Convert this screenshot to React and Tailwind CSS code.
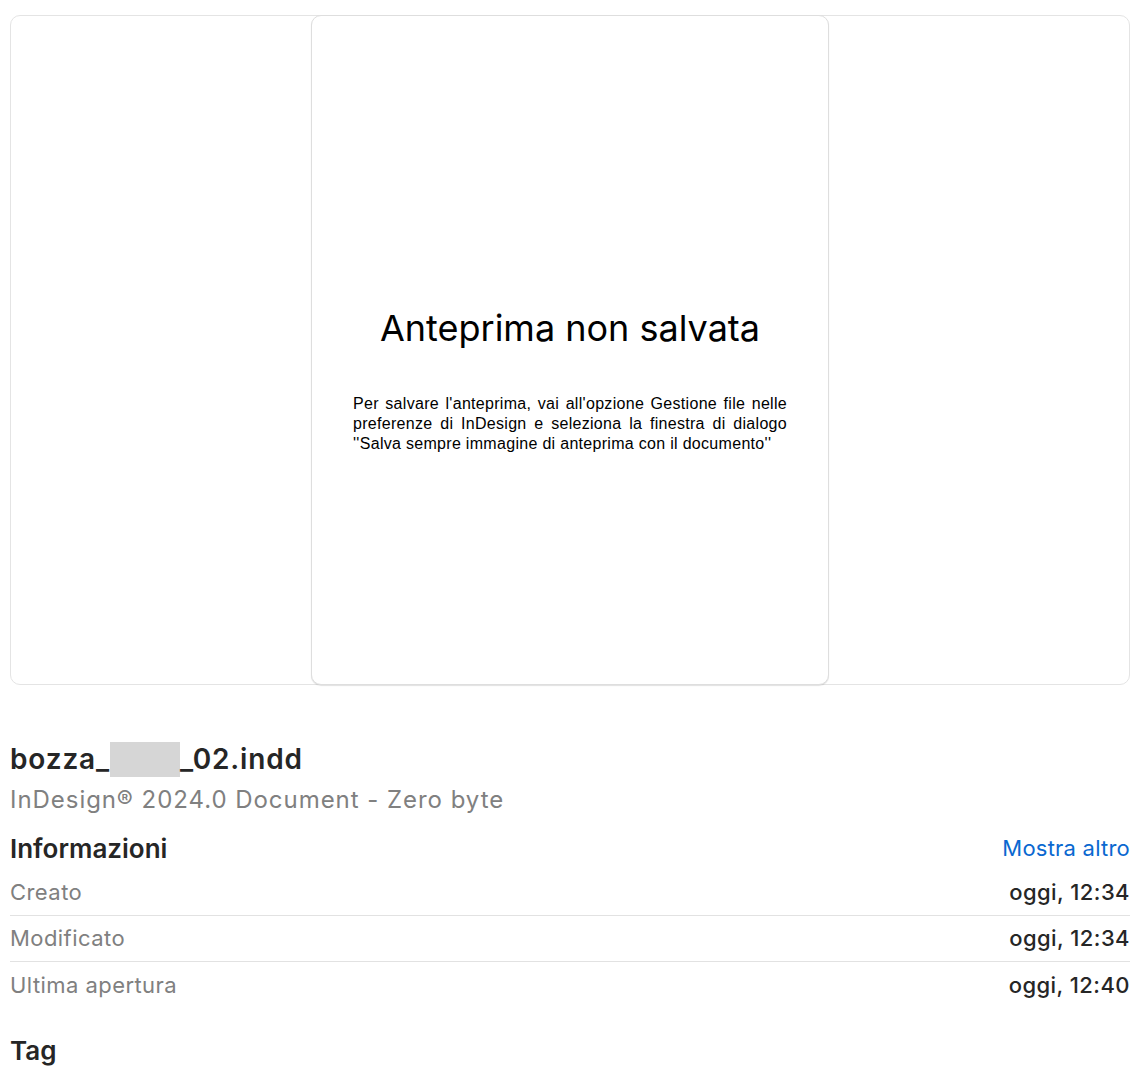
export default function App() {
  const rows = [
    { label: "Creato", value: "oggi, 12:34" },
    { label: "Modificato", value: "oggi, 12:34" },
    { label: "Ultima apertura", value: "oggi, 12:40" },
  ]

  return (
    <div className="min-h-screen bg-white pl-[10px] pr-[16px] pt-[15px] font-['Inter',sans-serif]">
      {/* Preview card */}
      <div className="flex h-[670px] justify-center rounded-[10px] border border-[#e4e4e4] bg-white">
        <div className="-my-px flex w-[518px] flex-col items-center rounded-[10px] border border-[#dedede] bg-white pt-[290px] shadow-[0_1px_1px_rgba(0,0,0,0.12)]">
          <h1 className="h-[44px] text-[36px] leading-[44px] text-black">Anteprima non salvata</h1>
          <p className="mt-[44px] w-[434px] text-justify font-['Liberation_Sans',sans-serif] text-[16px] leading-[20px] tracking-[0.3px] text-black [text-align-last:left]">
            Per salvare l'anteprima, vai all'opzione Gestione file nelle preferenze di InDesign e seleziona la finestra di dialogo ''Salva sempre immagine di anteprima con il documento''
          </p>
        </div>
      </div>

      {/* File info */}
      <div className="mt-[56px] flex h-[36px] items-center text-[28px] font-semibold tracking-[0.03em] text-[#262626]">
        <span>bozza_</span>
        <span className="h-[35px] w-[70px] bg-[#d6d6d6]"></span>
        <span>_02.indd</span>
      </div>
      <div className="mt-[7px] h-[32px] text-[24px] leading-[32px] tracking-[0.04em] text-[#808080]">InDesign® 2024.0 Document - Zero byte</div>

      <div className="mt-[16px] flex h-[32px] items-center justify-between">
        <span className="text-[26px] font-semibold text-[#262626]">Informazioni</span>
        <span className="text-[22px] tracking-[0.01em] text-[#0a68d0]">Mostra altro</span>
      </div>

      <div className="mt-[6px]">
        {rows.map((r, i) => (
          <div
            key={r.label}
            className={`flex h-[46px] items-center justify-between text-[22px] tracking-[0.02em] ${i < rows.length - 1 ? "border-b border-[#e2e2e2]" : ""}`}
          >
            <span className="text-[#808080]">{r.label}</span>
            <span className="font-medium text-[#262626]">{r.value}</span>
          </div>
        ))}
      </div>

      <div className="mt-[27px] h-[32px] text-[26px] font-semibold leading-[32px] text-[#262626]">Tag</div>
    </div>
  )
}
